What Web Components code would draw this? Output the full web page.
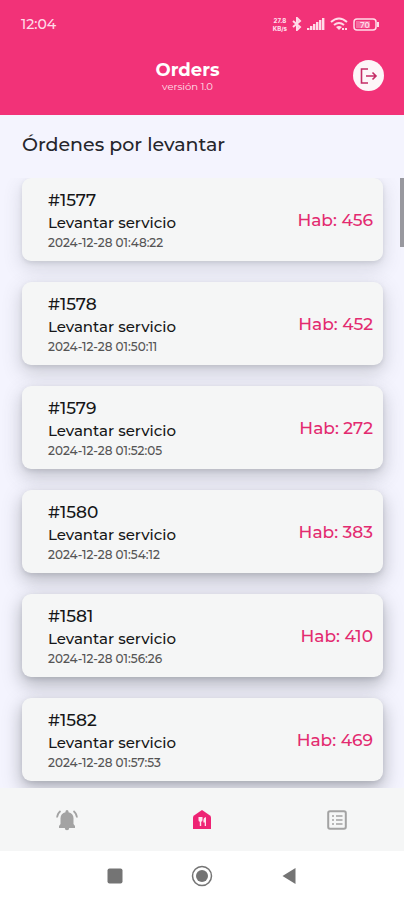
<!DOCTYPE html>
<html lang="es">
<head>
<meta charset="utf-8">
<meta name="viewport" content="width=device-width, initial-scale=1">
<title>Orders</title>
<style>
  body { margin: 0; font-family: Montserrat, Inter, "Open Sans", sans-serif; color: #161618; --pink: #f23278; --grey: #a3a3a3; }
</style>
</head>
<body>
<orders-app></orders-app>
<script>
class BaseElement extends HTMLElement {
  constructor() {
    super();
    this.attachShadow({ mode: 'open' });
  }
  connectedCallback() {
    this.shadowRoot.innerHTML = this.render();
  }
}

customElements.define('status-bar', class extends BaseElement {
  render() {
    return `<style>
      :host { display: flex; align-items: center; justify-content: space-between; height: 48px; padding: 0 24px 0 21px; color: #ffdbe8; }
      time { font-size: 14px; font-weight: 500; }
      .icons { display: flex; align-items: center; gap: 5px; }
      .rate { display: grid; gap: 1px; font: 800 6px/7px Inter, sans-serif; text-align: center; }
      svg { display: block; }
      .level { font: 600 8px Inter, sans-serif; }
    </style>
    <time>12:04</time>
    <div class="icons">
      <div class="rate"><span>27.8</span><span>KB/s</span></div>
      <svg width="10" height="14" viewBox="0 0 10 14" fill="none" stroke="currentColor" stroke-width="2"><path d="M1 4l7 6-3 3V1l3 3-7 6"/></svg>
      <svg width="18" height="12" viewBox="0 0 18 12" fill="currentColor"><path d="M0 10h2.400v2H0zM3 8h2.400v4H3zM6 6h2.400v6H6zM9 4h2.400v8H9zM12 2h2.400v10H12zM15 0h2.400v12H15z"/></svg>
      <svg width="18" height="14" viewBox="0 0 18 14" fill="none" stroke="currentColor" stroke-width="2"><path d="M1 5q8-7 16 0M4 8q5-4 10 0"/><path d="M6 10q3-2 6 0l-3 3z" fill="currentColor" stroke="none"/><path d="M12 12h2M15 12h2" stroke-width="2"/></svg>
      <svg width="27" height="13" viewBox="0 0 27 13" fill="none" stroke="currentColor"><rect x="1" y="1" width="22" height="11" rx="3" stroke-width="1.5"/><path d="M25 4v5" stroke-width="2"/><path d="M3 3h14v7H3z" fill="currentColor" opacity=".35" stroke="none"/><text class="level" x="12" y="9.5" text-anchor="middle" fill="currentColor" stroke="none">70</text></svg>
    </div>`;
  }
});

customElements.define('app-header', class extends BaseElement {
  render() {
    return `<style>
      :host { display: block; background: var(--pink); color: #fff; }
      .bar { display: flex; align-items: flex-start; height: 67px; padding: 12px 20px 0 22px; box-sizing: border-box; }
      .title { flex: 1; text-align: center; }
      h1 { margin: 0; font-size: 18px; line-height: 20px; font-weight: 700; }
      p { margin: 0; font-size: 10px; line-height: 14px; color: #ffe3ed; }
      button { width: 31px; height: 31px; padding: 0; border: 0; border-radius: 50%; background: #fdf5f8; color: #c42c66; display: grid; place-items: center; }
    </style>
    <status-bar></status-bar>
    <div class="bar">
      <div class="title"><h1>Orders</h1><p>versión 1.0</p></div>
      <button aria-label="Salir"><svg width="18" height="18" viewBox="0 0 18 18" fill="none" stroke="currentColor" stroke-width="1.6"><path d="M8 2H1.5v14H8M6 9h10M12.500 5.500L16 9l-3.500 3.500"/></svg></button>
    </div>`;
  }
});

customElements.define('order-card', class extends BaseElement {
  render() {
    return `<style>
      :host { display: flex; align-items: center; justify-content: space-between; box-sizing: border-box; min-height: 83px; padding: 0 10px 0 26px; border-radius: 9px; background: #f5f6f6; box-shadow: 0 7px 18px 1px rgb(80 84 92 / var(--shade, .2)), 0 2px 4px rgb(80 84 92 / .14); }
      .info { display: flex; flex-direction: column; }
      .id { font-size: 17px; line-height: 24px; font-weight: 500; }
      .task { font-size: 15px; line-height: 22px; font-weight: 500; }
      .date { font-size: 12px; line-height: 18px; font-weight: 500; color: #555; }
      .room { font-size: 17px; line-height: 24px; font-weight: 500; color: #e32b70; }
    </style>
    <div class="info">
      <span class="id"><slot name="id"></slot></span>
      <span class="task"><slot></slot></span>
      <span class="date"><slot name="date"></slot></span>
    </div>
    <span class="room"><slot name="room"></slot></span>`;
  }
});

customElements.define('order-list', class extends BaseElement {
  render() {
    const orders = [
      ['1577', '01:48:22', '456', .18], ['1578', '01:50:11', '452', .25],
      ['1579', '01:52:05', '272', .3], ['1580', '01:54:12', '383', .35],
      ['1581', '01:56:26', '410', .4], ['1582', '01:57:53', '469', .4]
    ];
    return `<style>
      :host { display: flex; flex-direction: column; flex: 1; min-height: 0; background: #f4f4fe; }
      h2 { margin: 0; padding: 17px 22px 20px; font-size: 19px; line-height: 26px; font-weight: 500; color: #26262c; }
      .scroll { position: relative; flex: 1; min-height: 0; overflow: hidden; }
      .cards { display: flex; flex-direction: column; gap: 21px; padding: 0 21px 0 22px; }
      .thumb { position: absolute; top: 0; right: 0; width: 4px; height: 69px; background: #98989f; }
    </style>
    <h2>Órdenes por levantar</h2>
    <div class="scroll">
      <div class="cards">${orders.map(([id, time, room, shade]) => `
        <order-card style="--shade:${shade}"><span slot="id">#${id}</span>Levantar servicio<span slot="date">2024-12-28 ${time}</span><span slot="room">Hab: ${room}</span></order-card>`).join('')}
      </div>
      <div class="thumb"></div>
    </div>`;
  }
});

customElements.define('tab-bar', class extends BaseElement {
  render() {
    return `<style>
      :host { display: block; background: #f5f6f6; }
      nav { display: grid; grid-template-columns: repeat(3, 1fr); height: 63px; }
      button { display: grid; place-items: center; padding: 0; border: 0; background: none; color: var(--grey); }
      button[aria-current] { color: #ee2374; }
    </style>
    <nav>
      <button aria-label="Avisos"><svg width="24" height="24" viewBox="0 0 24 24" fill="currentColor"><path d="M12 2a1.500 1.500 0 0 0-1.500 1.500v.8C7.500 5 5.500 7.200 5.500 10.200V16l-1.500 2v2h16v-2l-1.500-2v-5.800c0-3-2-5.200-5-5.900v-.8A1.500 1.500 0 0 0 12 2zM9.800 20a2.200 2.200 0 0 0 4.400 0z"/><path d="M5.500 3Q2.500 5.300 2 9.500M18.500 3q3 2.300 3.500 6.500" fill="none" stroke="currentColor" stroke-width="1.700"/></svg></button>
      <button aria-label="Restaurante" aria-current="page"><svg width="18" height="20" viewBox="0 0 18 20"><path d="M9 0l8 5.500q1 .8 1 2V19H0V7.500q0-1.200 1-2z" fill="currentColor"/><path d="M5.500 7h4v3q0 1.500-1.300 1.800V16H6.800v-4.200Q5.500 11.500 5.500 10zM13 7v9h-1.300v-3.500h-1.300V10q0-2.500 2.600-3z" fill="#ffe4ef"/></svg></button>
      <button aria-label="Lista"><svg width="20" height="20" viewBox="0 0 20 20" fill="none" stroke="currentColor"><rect x="1.200" y="1.200" width="17.600" height="17.600" rx="1.800" stroke-width="2"/><path d="M5 6h2M5 10h2M5 14h2M9 6h6.500M9 10h6.500M9 14h6.500" stroke-width="1.500"/></svg></button>
    </nav>`;
  }
});

customElements.define('system-nav', class extends BaseElement {
  render() {
    return `<style>
      :host { display: grid; grid-template-columns: repeat(3, 87px); justify-content: center; height: 49px; background: #fff; color: #747474; }
      button { display: grid; place-items: center; padding: 0; border: 0; background: none; color: inherit; }
    </style>
    <button aria-label="Recientes"><svg width="16" height="16" viewBox="0 0 16 16" fill="currentColor"><rect x=".5" y=".5" width="15" height="15" rx="2"/></svg></button>
    <button aria-label="Inicio"><svg width="22" height="22" viewBox="0 0 22 22"><circle cx="11" cy="11" r="9.500" fill="none" stroke="currentColor" stroke-width="1.500"/><circle cx="11" cy="11" r="6" fill="currentColor"/></svg></button>
    <button aria-label="Atrás"><svg width="16" height="18" viewBox="0 0 16 18" fill="currentColor"><path d="M14.500 1v16L1.500 9z"/></svg></button>`;
  }
});

customElements.define('orders-app', class extends BaseElement {
  render() {
    return `<style>:host { display: flex; flex-direction: column; height: 100vh; }</style>
    <app-header></app-header>
    <order-list></order-list>
    <tab-bar></tab-bar>
    <system-nav></system-nav>`;
  }
});
</script>
</body>
</html>
